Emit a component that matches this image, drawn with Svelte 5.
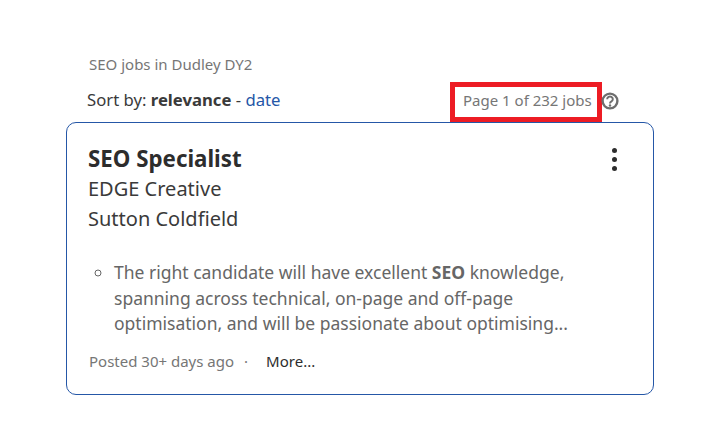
<script>
	const job = {
		title: 'SEO Specialist',
		company: 'EDGE Creative',
		location: 'Sutton Coldfield',
		posted: 'Posted 30+ days ago'
	};
</script>

<main class="page">
	<h1 class="heading">SEO jobs in Dudley DY2</h1>

	<div class="toolbar">
		<p class="sort">Sort by: <strong>relevance</strong> - <a href="#date">date</a></p>
		<div class="count">
			<span class="highlight">Page 1 of 232 jobs</span>
			<svg class="help" viewBox="0 0 18 18" width="18" height="18" aria-hidden="true">
				<circle cx="9" cy="9" r="7.4" fill="none" stroke="#6e6e6e" stroke-width="2.4" />
				<path d="M6.2 7.2a2.8 2.6 0 1 1 4.3 2.2c-1 .6-1.5 1-1.5 2" fill="none" stroke="#6e6e6e" stroke-width="2" />
				<circle cx="9" cy="13.5" r="1.2" fill="#6e6e6e" />
			</svg>
		</div>
	</div>

	<article class="card">
		<header class="card-head">
			<div>
				<h2>{job.title}</h2>
				<div class="line">{job.company}</div>
				<div class="line">{job.location}</div>
			</div>
			<button class="menu" aria-label="More options">
				<span></span><span></span><span></span>
			</button>
		</header>

		<ul class="snippet">
			<li>
				The right candidate will have excellent <strong>SEO</strong> knowledge, spanning across
				technical, on-page and off-page optimisation, and will be passionate about optimising...
			</li>
		</ul>

		<footer class="card-foot">
			<span class="posted">{job.posted}</span>
			<span class="dot">·</span>
			<a href="#more">More...</a>
		</footer>
	</article>
</main>

<style>
	:global(body) {
		background: #fff;
		font-family: 'Noto Sans', sans-serif;
	}

	.page {
		width: 588px;
		margin-left: 66px;
		padding-top: 55px;
	}

	.heading {
		margin: 0 0 0 23px;
		font-size: 15px;
		line-height: 19px;
		font-weight: 400;
		color: #767676;
	}

	.toolbar {
		display: flex;
		justify-content: space-between;
		align-items: flex-end;
		height: 48px;
	}

	.sort {
		margin: 0 0 11px 21px;
		font-size: 16.7px;
		line-height: 22px;
		color: #3a3a3a;
	}

	.sort a {
		color: #2557a7;
		text-decoration: none;
	}

	.count {
		display: flex;
		align-items: center;
		margin-right: 35px;
	}

	.highlight {
		box-sizing: border-box;
		width: 152px;
		height: 40px;
		border: 5px solid #ed1c24;
		padding-left: 8px;
		font-size: 15px;
		line-height: 26px;
		color: #767676;
		white-space: nowrap;
	}

	.help {
		margin-left: -1px;
		margin-bottom: 3px;
	}

	.card {
		box-sizing: border-box;
		height: 273px;
		border: 1px solid #2557a7;
		border-radius: 10px;
		padding: 21px 20px 0 21px;
	}

	.card-head {
		display: flex;
		justify-content: space-between;
	}

	h2 {
		margin: 0;
		font-size: 22.3px;
		line-height: 30px;
		font-weight: 700;
		color: #2d2d2d;
	}

	.line {
		font-size: 20px;
		line-height: 30px;
		color: #3a3a3a;
	}

	.menu {
		display: flex;
		flex-direction: column;
		gap: 4px;
		align-items: center;
		height: 24px;
		margin: 4px 16px 0 0;
		padding: 0;
		border: 0;
		background: none;
	}

	.menu span {
		width: 5px;
		height: 5px;
		border-radius: 50%;
		background: #2d2d2d;
	}

	.snippet {
		margin: 26px 0 0;
		padding: 0 40px 0 26px;
		list-style: circle;
		font-size: 17.5px;
		line-height: 25.5px;
		color: #666;
	}

	.card-foot {
		display: flex;
		align-items: center;
		margin-top: 12px;
		margin-left: 1px;
		font-size: 15px;
		line-height: 24px;
	}

	.posted {
		color: #767676;
	}

	.dot {
		margin-left: 10px;
		color: #767676;
	}

	.card-foot a {
		margin-left: 18px;
		color: #2d2d2d;
		text-decoration: none;
	}
</style>
